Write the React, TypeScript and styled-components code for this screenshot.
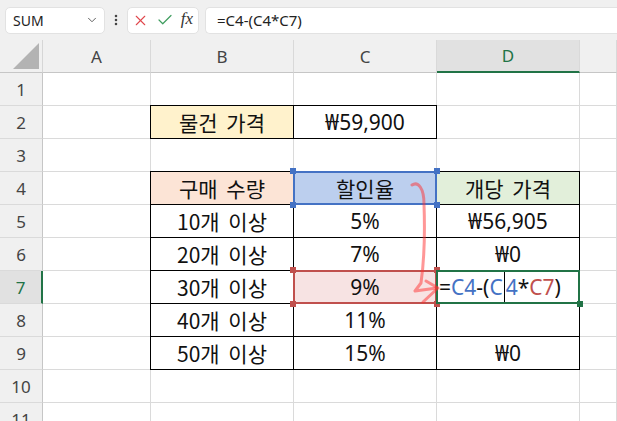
import React from 'react'
import styled, { createGlobalStyle, css } from 'styled-components'
import { ChevronDown, EllipsisVertical, X, Check } from 'lucide-react'

const GlobalStyle = createGlobalStyle`
  html, body {
    margin: 0;
    padding: 0;
    background: #ffffff;
    overflow: hidden;
  }
  body {
    font-family: "Noto Sans", "Noto Sans CJK KR", sans-serif;
  }
`

const Page = styled.div`
  position: relative;
  width: 617px;
  height: 421px;
  overflow: hidden;
  background: #ffffff;
`

const FormulaBar = styled.div`
  display: flex;
  align-items: center;
  height: 40px;
  padding-left: 5px;
  background: #f0f0f0;
  box-sizing: border-box;
`

const BarBox = styled.div`
  display: flex;
  align-items: center;
  height: 27px;
  box-sizing: border-box;
  background: #ffffff;
  border: 1px solid #e2e2e2;
  border-radius: 5px;
`

const NameBox = styled(BarBox)`
  width: 100px;
  justify-content: space-between;
  padding: 0 5px 0 7px;
  font-size: 14px;
  color: #222;
`

const Dots = styled.div`
  display: flex;
  align-items: center;
  justify-content: center;
  width: 22px;
  color: #444;
`

const ButtonGroup = styled(BarBox)`
  width: 72px;
  justify-content: space-between;
  padding: 0 5px 0 4px;
`

const Fx = styled.span`
  font-family: "Liberation Serif", serif;
  font-style: italic;
  font-size: 17px;
  color: #333;
  margin-top: -2px;
`

const FormulaInput = styled(BarBox)`
  flex: 1;
  margin-left: 6px;
  padding-left: 11px;
  border-right: none;
  border-radius: 5px 0 0 5px;
  font-size: 15px;
  color: #222;
`

const Sheet = styled.div`
  display: grid;
  grid-template-columns: 43px 108px 143px 143px 143px 1fr;
  grid-auto-rows: 33px;
  background: #ffffff;
`

const Corner = styled.div`
  display: flex;
  align-items: flex-end;
  justify-content: flex-end;
  padding: 0 3px 3px 0;
  background: #f0f0f0;
  border-right: 1px solid #d6d6d6;
  border-bottom: 1px solid #c6c6c6;
  box-sizing: border-box;
`

const ColHead = styled.div<{ $active?: boolean }>`
  display: flex;
  align-items: center;
  justify-content: center;
  box-sizing: border-box;
  font-size: 17px;
  color: #444;
  background: #f0f0f0;
  border-right: 1px solid #d9d9d9;
  border-bottom: 1px solid #c6c6c6;
  ${(p) =>
    p.$active &&
    css`
      background: #e1e1e1;
      color: #217346;
      border-bottom: 2px solid #217346;
    `}
`

const RowHead = styled.div<{ $active?: boolean }>`
  display: flex;
  align-items: center;
  justify-content: center;
  box-sizing: border-box;
  font-size: 17px;
  color: #444;
  background: #f0f0f0;
  border-right: 1px solid #c6c6c6;
  border-bottom: 1px solid #dadada;
  ${(p) =>
    p.$active &&
    css`
      background: #e1e1e1;
      color: #217346;
      border-right: 2px solid #217346;
    `}
`

const Cell = styled.div<{
  $bg?: string
  $boxed?: boolean
  $leftEdge?: boolean
  $topEdge?: boolean
  $left?: boolean
  $overlay?: boolean
}>`
  display: flex;
  align-items: center;
  justify-content: ${(p) => (p.$left ? 'flex-start' : 'center')};
  padding-left: ${(p) => (p.$left ? '2px' : '0')};
  box-sizing: border-box;
  font-family: "Noto Sans", "Noto Sans CJK KR", sans-serif;
  font-size: 21px;
  line-height: 1;
  color: #111;
  white-space: pre;
  background: ${(p) => p.$bg || '#ffffff'};
  border-right: 1px solid ${(p) => (p.$boxed ? '#000' : '#dadada')};
  border-bottom: 1px solid ${(p) => (p.$boxed ? '#000' : '#dadada')};
  position: ${(p) => (p.$overlay ? 'relative' : 'static')};
  box-shadow: ${(p) =>
    [
      p.$leftEdge ? '-1px 0 0 #000' : '',
      p.$topEdge ? '0 -1px 0 #000' : '',
      p.$leftEdge && p.$topEdge ? '-1px -1px 0 #000' : '',
    ]
      .filter(Boolean)
      .join(', ') || 'none'};
`

const Hangul = styled.span`
  font-family: "Noto Sans CJK KR", sans-serif;
  word-spacing: 4px;
`

const Selection = styled.div<{ $color: string }>`
  position: absolute;
  top: -1px;
  left: -1px;
  right: -1px;
  bottom: -1px;
  border: 2px solid ${(p) => p.$color};
  pointer-events: none;
`

const Handle = styled.div<{ $color: string; $x: 'l' | 'r'; $y: 't' | 'b' }>`
  position: absolute;
  width: 6px;
  height: 6px;
  background: ${(p) => p.$color};
  ${(p) => (p.$x === 'l' ? 'left: -4px;' : 'right: -4px;')}
  ${(p) => (p.$y === 't' ? 'top: -4px;' : 'bottom: -4px;')}
`

const Ref = styled.span<{ $color: string }>`
  color: ${(p) => p.$color};
`

const Caret = styled.span`
  display: inline-block;
  width: 0;
  height: 31px;
  border-left: 1px solid #000;
  vertical-align: middle;
  margin: 0 1px;
`

const EditText = styled.span`
  display: flex;
  align-items: center;
`

const ArrowLayer = styled.svg`
  position: absolute;
  left: 0;
  top: 0;
  pointer-events: none;
`

const BLUE = '#4472c4'
const RED = '#c0504d'
const GREEN = '#217346'

const cols = ['A', 'B', 'C', 'D', '']

type Row = {
  b: string
  c: string
  d?: string
}

const tiers: Row[] = [
  { b: '10개 이상', c: '5%', d: '₩56,905' },
  { b: '20개 이상', c: '7%', d: '₩0' },
  { b: '30개 이상', c: '9%' },
  { b: '40개 이상', c: '11%' },
  { b: '50개 이상', c: '15%', d: '₩0' },
]

function Handles({ color, only }: { color: string; only?: 'br' }) {
  if (only) return <Handle $color={color} $x="r" $y="b" />
  return (
    <>
      <Handle $color={color} $x="l" $y="t" />
      <Handle $color={color} $x="r" $y="t" />
      <Handle $color={color} $x="l" $y="b" />
      <Handle $color={color} $x="r" $y="b" />
    </>
  )
}

function Blank() {
  return <Cell />
}

function text(s: string) {
  return /[가-힣]/.test(s) ? <Hangul>{s}</Hangul> : s
}

export default function App() {
  return (
    <Page>
      <GlobalStyle />
      <FormulaBar>
        <NameBox>
          <span>SUM</span>
          <ChevronDown size={14} color="#555" strokeWidth={1.6} />
        </NameBox>
        <Dots>
          <EllipsisVertical size={14} strokeWidth={2.4} />
        </Dots>
        <ButtonGroup>
          <X size={17} color="#e0474c" strokeWidth={1.5} />
          <Check size={18} color="#3f9d5f" strokeWidth={1.6} />
          <Fx>fx</Fx>
        </ButtonGroup>
        <FormulaInput>=C4-(C4*C7)</FormulaInput>
      </FormulaBar>

      <Sheet>
        <Corner>
          <svg width="26" height="26" viewBox="0 0 26 26">
            <polygon points="26,0 26,26 0,26" fill="#b3b3b3" />
          </svg>
        </Corner>
        {cols.map((c) => (
          <ColHead key={c || 'E'} $active={c === 'D'}>
            {c}
          </ColHead>
        ))}

        {/* row 1 */}
        <RowHead>1</RowHead>
        <Blank /><Blank /><Blank /><Blank /><Blank />

        {/* row 2 */}
        <RowHead>2</RowHead>
        <Blank />
        <Cell $bg="#fff2cc" $boxed $leftEdge $topEdge>{text('물건 가격')}</Cell>
        <Cell $boxed $topEdge>₩59,900</Cell>
        <Blank /><Blank />

        {/* row 3 */}
        <RowHead>3</RowHead>
        <Blank /><Blank /><Blank /><Blank /><Blank />

        {/* row 4 */}
        <RowHead>4</RowHead>
        <Blank />
        <Cell $bg="#fce4d6" $boxed $leftEdge $topEdge>{text('구매 수량')}</Cell>
        <Cell $bg="#bccfee" $boxed $topEdge $overlay>
          {text('할인율')}
          <Selection $color={BLUE} />
          <Handles color={BLUE} />
        </Cell>
        <Cell $bg="#e2efda" $boxed $topEdge>{text('개당 가격')}</Cell>
        <Blank />

        {tiers.map((r, i) => {
          const n = i + 5
          const editing = n === 7
          return (
            <React.Fragment key={n}>
              <RowHead $active={editing}>{n}</RowHead>
              <Blank />
              <Cell $boxed $leftEdge>{text(r.b)}</Cell>
              {editing ? (
                <Cell $boxed $bg="#f7e3e3" $overlay>
                  {r.c}
                  <Selection $color={RED} />
                  <Handles color={RED} />
                </Cell>
              ) : (
                <Cell $boxed>{r.c}</Cell>
              )}
              {editing ? (
                <Cell $boxed $left $overlay>
                  <EditText>
                    =<Ref $color={BLUE}>C4</Ref>-(<Ref $color={BLUE}>C</Ref>
                    <Caret />
                    <Ref $color={BLUE}>4</Ref>*<Ref $color={RED}>C7</Ref>)
                  </EditText>
                  <Selection $color={GREEN} />
                  <Handles color={GREEN} only="br" />
                </Cell>
              ) : (
                <Cell $boxed>{r.d}</Cell>
              )}
              <Blank />
            </React.Fragment>
          )
        })}

        {/* rows 10-11 */}
        <RowHead>10</RowHead>
        <Blank /><Blank /><Blank /><Blank /><Blank />
        <RowHead>11</RowHead>
        <Blank /><Blank /><Blank /><Blank /><Blank />
      </Sheet>

      <ArrowLayer width="617" height="421" viewBox="0 0 617 421">
        <g
          fill="none"
          stroke="#ff3030"
          strokeOpacity="0.5"
          strokeWidth="3"
          strokeLinecap="round"
          strokeLinejoin="round"
        >
          <path d="M412,185 C418,181 424,188 424,204 C425,232 424,262 421,283 L415,291 L437,288" />
          <path d="M426,281 L438,288 L423,302" />
        </g>
      </ArrowLayer>
    </Page>
  )
}
